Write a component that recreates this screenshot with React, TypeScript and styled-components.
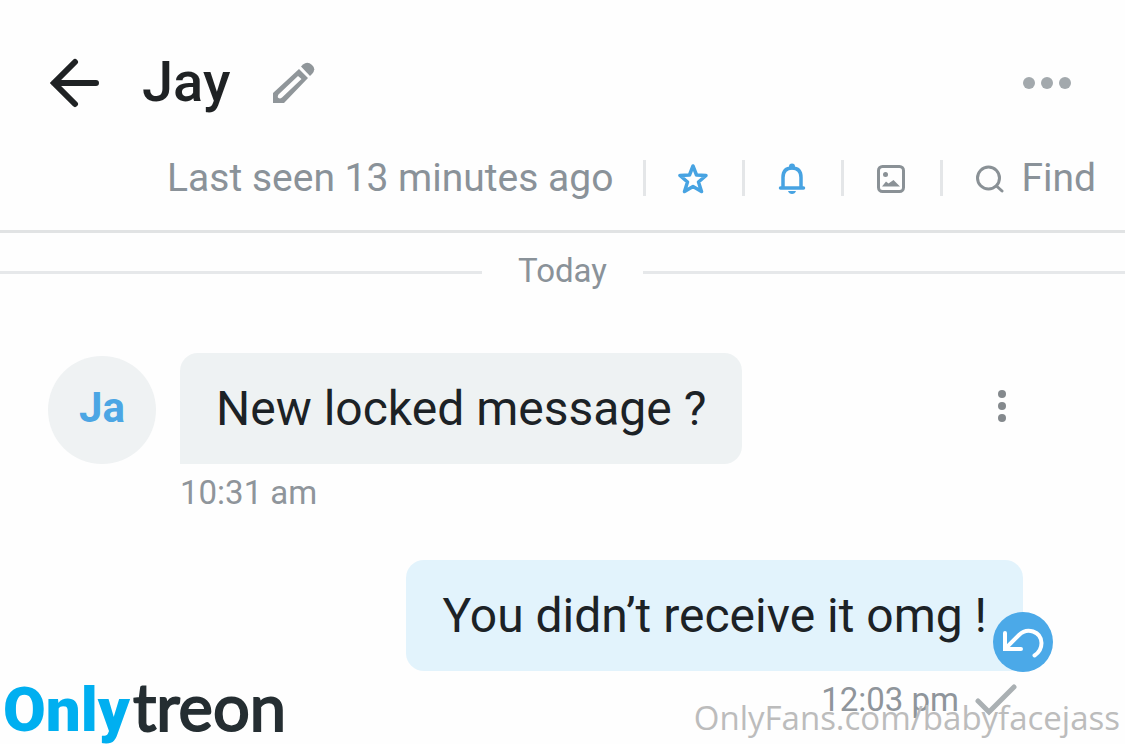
import React from "react";
import styled, { createGlobalStyle } from "styled-components";

const Global = createGlobalStyle`
  * { box-sizing: border-box; }
  body { margin: 0; background: #fefefe; font-family: Roboto, "Liberation Sans", sans-serif; }
  button { border: 0; padding: 0; background: none; font: inherit; color: inherit; cursor: pointer; }
  svg { display: block; }
`;

const Page = styled.div`
  position: relative;
  display: flex;
  flex-direction: column;
  min-height: 100vh;
  overflow: hidden;
`;

const Header = styled.header`
  padding: 48px 29px 34px 50px;
  border-bottom: 3px solid #e1e3e4;
`;

const TitleRow = styled.div`
  display: flex;
  align-items: center;
  height: 70px;
  padding-right: 24px;
`;

const Name = styled.h1`
  margin: 0 42px;
  font-size: 56px;
  line-height: 68px;
  padding-bottom: 2px;
  font-weight: 500;
  color: #1f2224;
`;

const IconButton = styled.button<{ $push?: boolean }>`
  display: flex;
  align-items: center;
  justify-content: center;
  margin-left: ${(p) => (p.$push ? "auto" : "0")};
`;

const StatusRow = styled.div`
  display: flex;
  align-items: center;
  justify-content: flex-end;
  height: 36px;
  margin-top: 42px;
  font-size: 39px;
  line-height: 36px;
  color: #8a9299;
`;

const LastSeen = styled.span`
  margin-right: 30px;
  white-space: nowrap;
`;

const Tool = styled.button`
  display: flex;
  align-items: center;
  justify-content: center;
  width: 99px;
  height: 36px;
  border-left: 3px solid #e4e6e8;
`;

const Find = styled(Tool)`
  width: auto;
  padding-left: 32px;
  gap: 16px;
`;

const DateDivider = styled.div`
  display: flex;
  align-items: center;
  gap: 36px;
  height: 78px;
  font-size: 33px;
  color: #8a9299;

  &::before,
  &::after {
    content: "";
    flex: 1;
    height: 3px;
    background: #e6e8ea;
  }
`;

const DateLabel = styled.span`
  padding-bottom: 4px;
`;

const Messages = styled.main`
  display: flex;
  flex-direction: column;
  gap: 39px;
  padding: 42px 102px 0 48px;
`;

const Incoming = styled.article`
  display: flex;
  align-items: flex-start;
  gap: 24px;
`;

const Outgoing = styled.article`
  display: flex;
  flex-direction: column;
  align-items: flex-end;
`;

const Avatar = styled.div`
  display: flex;
  align-items: center;
  justify-content: center;
  flex: none;
  width: 108px;
  height: 108px;
  margin-top: 3px;
  padding-bottom: 5px;
  border-radius: 50%;
  background: #eff2f3;
  color: #4ca6e4;
  font-size: 42px;
  font-weight: 700;
`;

const Bubble = styled.p<{ $own?: boolean }>`
  position: relative;
  margin: 0;
  padding: 28px 36px 27px;
  border-radius: ${(p) => (p.$own ? "18px 18px 0 18px" : "18px 18px 18px 0")};
  background: ${(p) => (p.$own ? "#e2f3fc" : "#eef2f3")};
  color: #1c2226;
  font-size: 48px;
  line-height: 56px;
`;

const Time = styled.time`
  display: block;
  font-size: 33px;
  line-height: 57px;
  color: #8f959b;
`;

const Receipt = styled.div`
  display: flex;
  align-items: center;
  gap: 16px;
  padding-right: 6px;
`;

const Menu = styled(IconButton)`
  width: 42px;
  height: 106px;
  margin: 0 0 0 auto;
`;

const Undo = styled.button`
  position: absolute;
  right: -30px;
  bottom: -1px;
  width: 60px;
  height: 60px;
  border-radius: 50%;
  background: #4ba9e8;
`;

const Logo = styled.div`
  position: absolute;
  left: 3px;
  bottom: 0;
  display: flex;
  align-items: baseline;
  height: 64px;
  line-height: 52px;
`;

const LogoBold = styled.span`
  font-size: 62px;
  font-weight: 900;
  color: #00aff0;
`;

const LogoLight = styled.span`
  margin-left: 3px;
  font-family: Lato, sans-serif;
  font-size: 65px;
  color: #252e32;
  -webkit-text-stroke: 2px #252e32;
`;

const Watermark = styled.div`
  position: absolute;
  right: 5px;
  bottom: 2px;
  font-family: "Open Sans", sans-serif;
  font-size: 33px;
  line-height: 48px;
  color: #bcbcbc;
  pointer-events: none;
`;

export default function App() {
  return (
    <Page>
      <Global />
      <Header>
        <TitleRow>
          <IconButton aria-label="Back">
            <svg width="50" height="50" viewBox="0 0 50 50" fill="none" stroke="#1f2224" strokeWidth="6" strokeLinecap="round" strokeLinejoin="miter">
              <path d="M25 4L4 25L25 46M4 25H46" />
            </svg>
          </IconButton>
          <Name>Jay</Name>
          <IconButton aria-label="Edit name">
            <svg width="44" height="42" viewBox="0 0 44 42">
              <path fillRule="evenodd" fill="#90969a" d="M27 7L36 16L12 41H1V31ZM26 14L6.500 32.500Q5 35 6.500 36T10 35.500L29.500 17Z" />
              <path fill="#90969a" d="M29 4.500L31 2.500Q35.500-1 40 3T40 12L38 14Z" />
            </svg>
          </IconButton>
          <IconButton $push aria-label="More">
            <svg width="50" height="14" viewBox="0 0 50 14" fill="#a3a9ad">
              <circle cx="7" cy="7" r="6" />
              <circle cx="25" cy="7" r="6" />
              <circle cx="43" cy="7" r="6" />
            </svg>
          </IconButton>
        </TitleRow>
        <StatusRow>
          <LastSeen>Last seen 13 minutes ago</LastSeen>
          <Tool aria-label="Favourite">
            <svg width="32" height="32" viewBox="0 0 32 32" fill="none" stroke="#47a3e2" strokeWidth="3.500" strokeLinejoin="round">
              <path d="M15 4L18.500 13L28 13.500L20.500 20L23.500 29.500L15 24.500L6.500 29.500L9.500 20L2 13.500L11.500 13Z" />
            </svg>
          </Tool>
          <Tool aria-label="Notifications">
            <svg width="32" height="32" viewBox="0 0 32 32" fill="none" stroke="#47a3e2" strokeWidth="3.500" strokeLinecap="round" strokeLinejoin="round">
              <path d="M3.500 26H26.500M6 25.500V15.500Q6 6 15 6T24 15.500V25.500" />
              <circle cx="15" cy="4.500" r="3" fill="#47a3e2" stroke="none" />
              <path d="M11 29H19Q18 32 15 32T11 29Z" fill="#47a3e2" stroke="none" />
            </svg>
          </Tool>
          <Tool aria-label="Gallery">
            <svg width="32" height="32" viewBox="0 0 32 32" fill="#8a9196">
              <rect x="2.500" y="4.500" width="25" height="25" rx="4" fill="none" stroke="#8a9196" strokeWidth="3" />
              <circle cx="9.500" cy="12.500" r="2.500" />
              <path d="M6 24.500L10 19.500L12.500 21.500L17.500 18L24 24.500Z" />
            </svg>
          </Tool>
          <Find>
            <svg width="30" height="30" viewBox="0 0 30 30" fill="none" stroke="#8a9196" strokeWidth="3" strokeLinecap="round">
              <circle cx="13.500" cy="15" r="11" />
              <path d="M21.500 23L27 28" />
            </svg>
            Find
          </Find>
        </StatusRow>
      </Header>

      <DateDivider>
        <DateLabel>Today</DateLabel>
      </DateDivider>

      <Messages>
        <Incoming>
          <Avatar>Ja</Avatar>
          <div>
            <Bubble>New locked message ?</Bubble>
            <Time>10:31 am</Time>
          </div>
          <Menu aria-label="Message options">
            <svg width="10" height="34" viewBox="0 0 10 34" fill="#84898d">
              <circle cx="5" cy="5" r="4" />
              <circle cx="5" cy="17" r="4" />
              <circle cx="5" cy="29" r="4" />
            </svg>
          </Menu>
        </Incoming>
        <Outgoing>
          <Bubble $own>
            You didn’t receive it omg !
            <Undo aria-label="Unsend">
              <svg width="60" height="60" viewBox="0 0 60 60" fill="none" stroke="#ffffff" strokeWidth="4" strokeLinecap="round" strokeLinejoin="miter">
                <path d="M12 21V37H28M12.500 36.500L26 23C34 15 48 19 48.500 31Q48.500 39 41.500 43.500" />
              </svg>
            </Undo>
          </Bubble>
          <Receipt>
            <Time>12:03 pm</Time>
            <svg width="42" height="32" viewBox="0 0 42 32" fill="none" stroke="#aab0b3" strokeWidth="5" strokeLinecap="round">
              <path d="M3 17L14 28L39 3" />
            </svg>
          </Receipt>
        </Outgoing>
      </Messages>

      <Logo>
        <LogoBold>Only</LogoBold>
        <LogoLight>treon</LogoLight>
      </Logo>
      <Watermark>OnlyFans.com/babyfacejass</Watermark>
    </Page>
  );
}
